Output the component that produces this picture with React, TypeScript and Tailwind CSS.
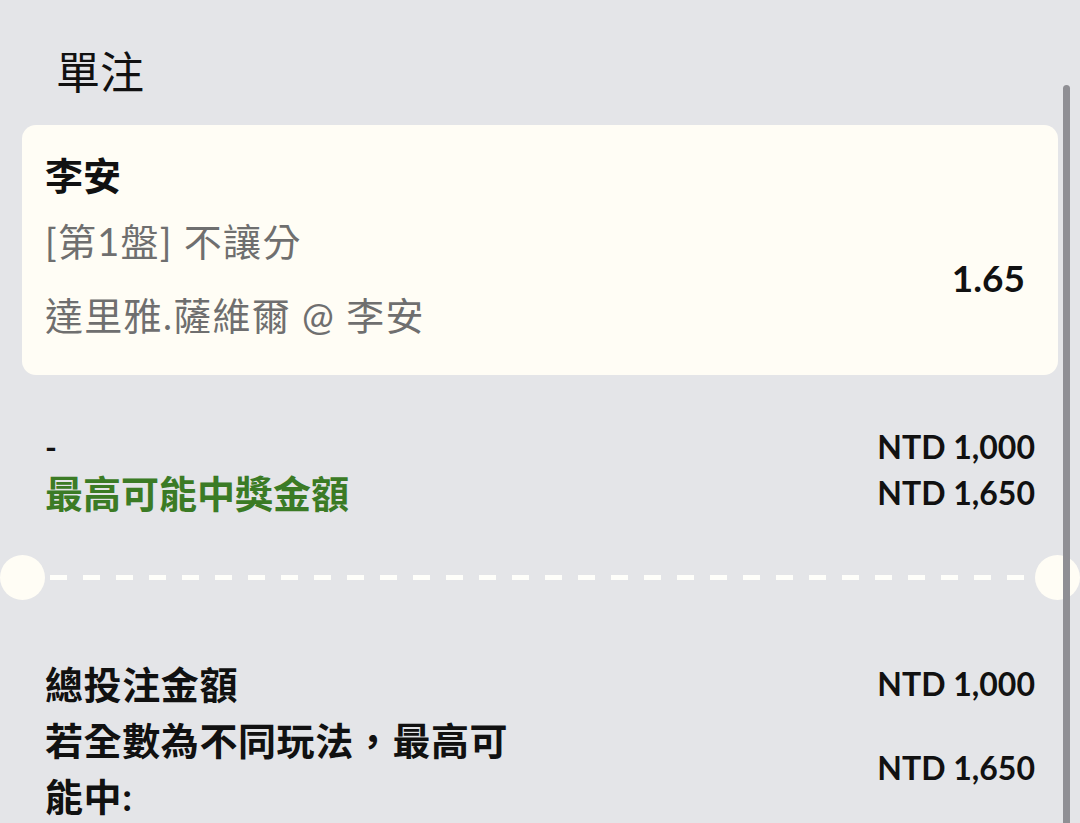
const FONT = "font-['Lato','Noto_Sans_CJK_TC',sans-serif]";

type AmountRowProps = {
  label: React.ReactNode;
  value: string;
};

function Ticket() {
  return (
    <div className="mx-[22px] mt-[25px] h-[250px] rounded-[14px] bg-[#fffdf5] pl-[23px] pr-[33px] pt-[28px]">
      <div className="text-[38px] leading-[44px] font-bold text-[#111]">李安</div>
      <div className="mt-[22px] flex flex-row items-center justify-between">
        <div className="flex flex-col gap-[30px] text-[38px] tracking-[1.3px] text-[#6f6f6f]">
          <div className="leading-[44px]">[第1盤] 不讓分</div>
          <div className="leading-[44px]">達里雅.薩維爾 @ 李安</div>
        </div>
        <div className="text-[37px] font-bold text-[#111] leading-[44px]">1.65</div>
      </div>
    </div>
  );
}

function Divider() {
  return (
    <div className="flex flex-row items-center mt-[39px] h-[45px]">
      <div className="w-[45px] h-[45px] rounded-full bg-[#fffdf5] shrink-0"></div>
      <div className="flex-1 mx-[5px] h-[5px] bg-[repeating-linear-gradient(90deg,#fefefa_0_17px,transparent_17px_33px)]"></div>
      <div className="w-[45px] h-[45px] rounded-full bg-[#fffdf5] shrink-0"></div>
    </div>
  );
}

function AmountRow({ label, value }: AmountRowProps) {
  return (
    <div className="flex flex-row items-center justify-between">
      <div className="w-[480px] text-[38px] tracking-[0.6px] font-bold leading-[56px] text-[#111]">{label}</div>
      <div className="text-[32px] font-bold leading-[46px] text-[#111]">{value}</div>
    </div>
  );
}

export default function App() {
  return (
    <div className={`relative w-[1080px] h-[823px] overflow-hidden bg-[#e4e5e8] ${FONT}`}>
      <div className="pl-[56px] pt-[44px] text-[44px] leading-[56px] text-[#111]">單注</div>
      <Ticket />

      <div className="mt-[49px] pl-[45px] pr-[45px] flex flex-col">
        <div className="flex flex-row justify-between items-center h-[46px]">
          <span className="text-[32px] font-bold text-[#111]">-</span>
          <span className="text-[32px] font-bold text-[#111]">NTD 1,000</span>
        </div>
        <div className="flex flex-row justify-between items-center h-[46px]">
          <span className="text-[38px] font-bold text-[#3b7b25]">最高可能中獎金額</span>
          <span className="text-[32px] font-bold text-[#111]">NTD 1,650</span>
        </div>
      </div>

      <Divider />

      <div className="mt-[56px] pl-[45px] pr-[45px] flex flex-col">
        <AmountRow label="總投注金額" value="NTD 1,000" />
        <AmountRow label="若全數為不同玩法，最高可能中:" value="NTD 1,650" />
      </div>

      <div className="absolute right-[10px] top-[85px] bottom-0 w-[7px] rounded-t-full bg-[#8f8f94]"></div>
    </div>
  );
}
